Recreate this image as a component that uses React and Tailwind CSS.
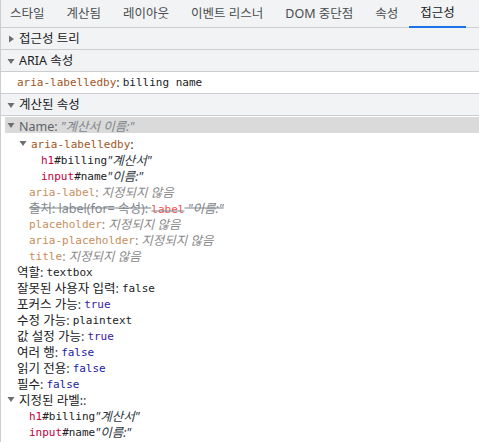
import React from "react";

const sans = "font-['Noto_Sans','Noto_Sans_CJK_KR',sans-serif] text-[12.5px] tracking-normal";
const mono = "font-['DejaVu_Sans_Mono','Liberation_Mono',monospace] text-[11px] tracking-normal";

const Tri = ({ open }) => (
  <svg width="8" height="8" viewBox="0 0 8 8" className="shrink-0">
    {open ? (
      <polygon points="0.5,2 7.5,2 4,7" fill="#6e6e6e" />
    ) : (
      <polygon points="2,0.5 2,7.5 7,4" fill="#6e6e6e" />
    )}
  </svg>
);

const tabs = ["스타일", "계산됨", "레이아웃", "이벤트 리스너", "DOM 중단점", "속성", "접근성"];

const Header = ({ open, children }) => (
  <div className="h-[22px] flex items-center bg-[#f1f3f4] border-b border-[#cbcdd1] pl-[6px]">
    <Tri open={open} />
    <span className="ml-[4px] pt-[2px] text-[#202124]">{children}</span>
  </div>
);

const Row = ({ pl, children }) => (
  <div className="h-[16px] flex items-center whitespace-nowrap" style={{ paddingLeft: pl }}>
    {children}
  </div>
);

const Colon = ({ c = "#303942" }) => <span style={{ color: c }} className="mr-[3px]">:</span>;

const Val = ({ children, c = "#1a1aa6" }) => (
  <span className={mono} style={{ color: c }}>{children}</span>
);

const Unset = () => <span className="italic text-[#8a8a8a]">지정되지 않음</span>;

export default function App() {
  return (
    <div className={`w-[479px] h-[442px] overflow-hidden bg-white border-l border-[#cbcdd1] text-[#202124] ${sans}`}>
      <div className="flex h-[28px] bg-[#f1f3f4] border-b border-[#cbcdd1] -ml-[2px]">
        {tabs.map((t) => (
          <div
            key={t}
            className={`px-[11px] pt-[1px] flex items-center ${
              t === "접근성" ? "border-b-2 border-[#1a73e8] -mb-px text-[#202124]" : "text-[#4a4d51]"
            }`}
          >
            {t}
          </div>
        ))}
      </div>

      <Header open={false}>접근성 트리</Header>
      <Header open>ARIA 속성</Header>
      <div className="h-[22px] flex items-center border-b border-[#cbcdd1] pl-[16px] pt-[2px] bg-white">
        <span className={mono + " text-[#a0561e]"}>aria-labelledby</span>
        <Colon />
        <span className={mono + " text-[#202124]"}>billing name</span>
      </div>
      <Header open>계산된 속성</Header>

      <div className="pt-[1px] leading-[16px] [&>div>span]:translate-y-[1.5px]">
        <div className="h-[16px] ml-[4px] bg-[#dadada] flex items-center pl-[2px] whitespace-nowrap">
          <Tri open />
          <span className="ml-[4px] text-[#5f6368]">Name</span>
          <Colon c="#5f6368" />
          <span className="italic text-[#80868b]">"계산서 이름:"</span>
        </div>
        <div className="h-[2px]" />
        <Row pl={18}>
          <Tri open />
          <span className={mono + " ml-[4px] text-[#a0561e]"}>aria-labelledby</span>
          <span className="text-[#303942]">:</span>
        </Row>
        <Row pl={40}>
          <span className={mono + " text-[#c4003c]"}>h1</span>
          <span className={mono + " text-[#202124]"}>#billing</span>
          <span className="italic text-[#303942]">"계산서"</span>
        </Row>
        <Row pl={40}>
          <span className={mono + " text-[#c4003c]"}>input</span>
          <span className={mono + " text-[#202124]"}>#name</span>
          <span className="italic text-[#303942]">"이름:"</span>
        </Row>
        <Row pl={28}>
          <span className={mono + " text-[#c58e5c]"}>aria-label</span>
          <Colon c="#8a8a8a" />
          <Unset />
        </Row>
        <Row pl={28}>
          <span className="line-through text-[#80868b]">
            출처: label(for= 속성):{" "}
            <span className={mono + " text-[#ef5350]"}>label</span>
            <span className="italic"> "이름:"</span>
          </span>
        </Row>
        <Row pl={28}>
          <span className={mono + " text-[#c58e5c]"}>placeholder</span>
          <Colon c="#8a8a8a" />
          <Unset />
        </Row>
        <Row pl={28}>
          <span className={mono + " text-[#c58e5c]"}>aria-placeholder</span>
          <Colon c="#8a8a8a" />
          <Unset />
        </Row>
        <Row pl={28}>
          <span className={mono + " text-[#c58e5c]"}>title</span>
          <Colon c="#8a8a8a" />
          <Unset />
        </Row>
        <Row pl={16}>
          <span>역할</span><Colon />
          <Val c="#202124">textbox</Val>
        </Row>
        <Row pl={16}>
          <span>잘못된 사용자 입력</span><Colon />
          <Val c="#202124">false</Val>
        </Row>
        <Row pl={16}>
          <span>포커스 가능</span><Colon />
          <Val c="#3a17a8">true</Val>
        </Row>
        <Row pl={16}>
          <span>수정 가능</span><Colon />
          <Val c="#202124">plaintext</Val>
        </Row>
        <Row pl={16}>
          <span>값 설정 가능</span><Colon />
          <Val c="#3a17a8">true</Val>
        </Row>
        <Row pl={16}>
          <span>여러 행</span><Colon />
          <Val>false</Val>
        </Row>
        <Row pl={16}>
          <span>읽기 전용</span><Colon />
          <Val>false</Val>
        </Row>
        <Row pl={16}>
          <span>필수</span><Colon />
          <Val>false</Val>
        </Row>
        <Row pl={6}>
          <Tri open />
          <span className="ml-[4px]">지정된 라벨:</span>
          <span className="text-[#303942]">:</span>
        </Row>
        <Row pl={28}>
          <span className={mono + " text-[#c4003c]"}>h1</span>
          <span className={mono + " text-[#202124]"}>#billing</span>
          <span className="italic text-[#303942]">"계산서"</span>
        </Row>
        <Row pl={28}>
          <span className={mono + " text-[#c4003c]"}>input</span>
          <span className={mono + " text-[#202124]"}>#name</span>
          <span className="italic text-[#303942]">"이름:"</span>
        </Row>
      </div>
    </div>
  );
}
